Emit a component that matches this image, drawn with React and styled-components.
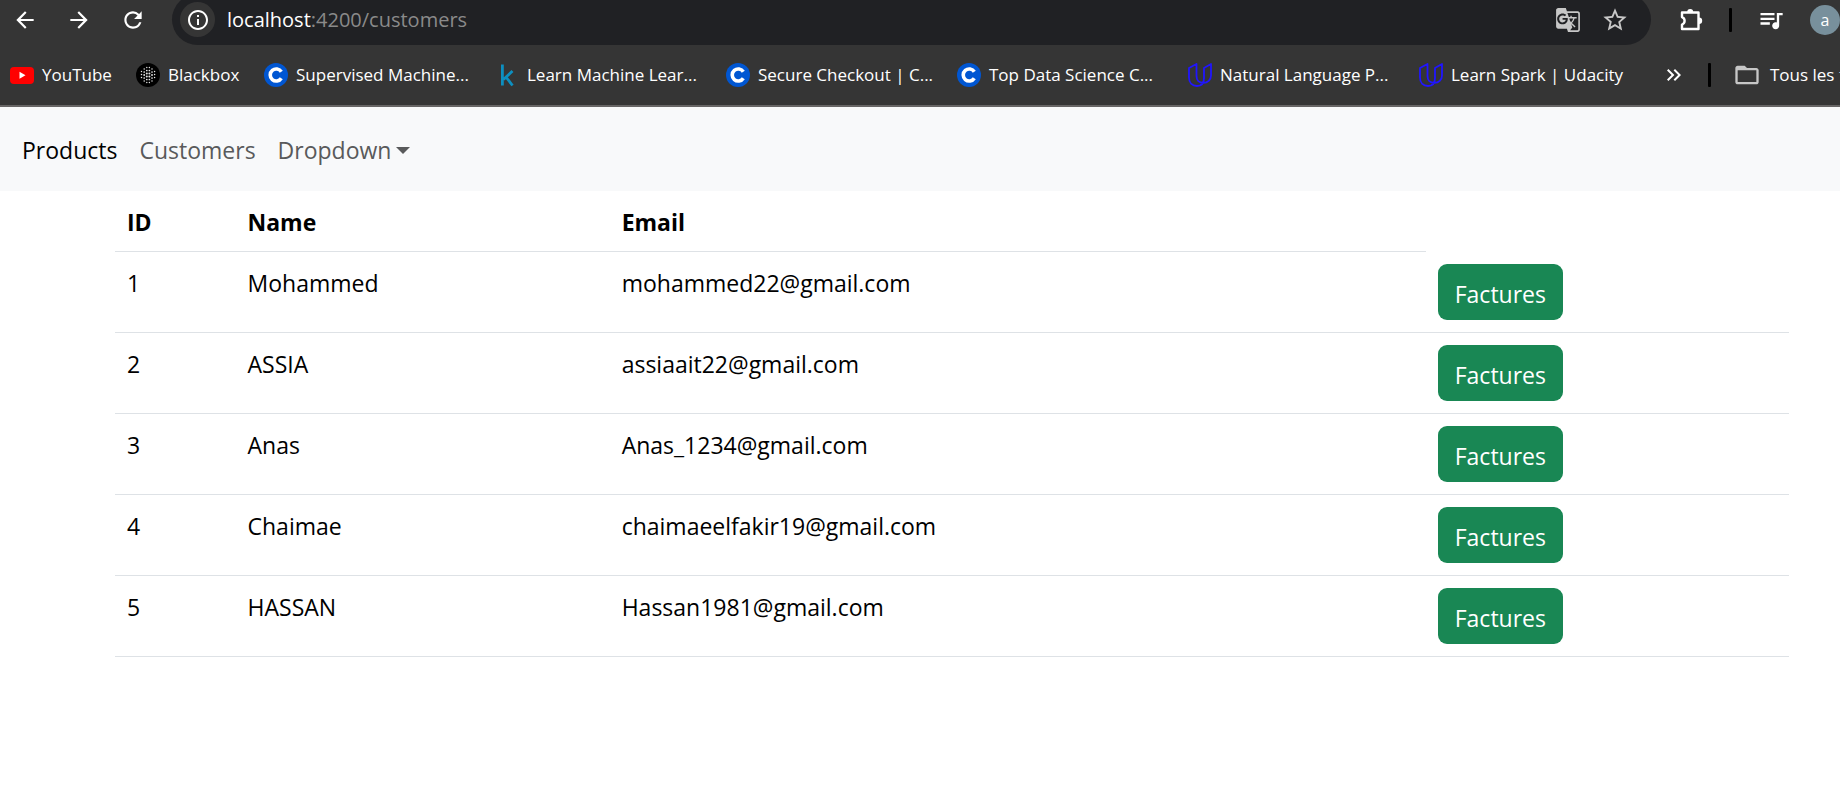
import React from "react";
import styled, { createGlobalStyle, css } from "styled-components";
import {
  MdArrowBack,
  MdArrowForward,
  MdRefresh,
  MdInfoOutline,
  MdGTranslate,
  MdStarBorder,
  MdQueueMusic,
  MdKeyboardDoubleArrowRight,
  MdFolderOpen,
} from "react-icons/md";

const GlobalStyle = createGlobalStyle`
  *, *::before, *::after { box-sizing: border-box; }
  body {
    margin: 0;
    background: #fff;
    color: #000;
    font-family: "Segoe UI", "Open Sans", "Noto Sans", sans-serif;
    overflow-x: hidden;
  }
  button { font: inherit; color: inherit; border: 0; background: none; padding: 0; cursor: pointer; }
  a { color: inherit; text-decoration: none; }
  svg { display: block; flex: none; }
`;

const BrowserChrome = styled.header`
  background: #353535;
  color: #fff;
  border-bottom: 2px solid #676565;
  overflow: hidden;
`;

const Toolbar = styled.div`
  display: flex;
  align-items: center;
  height: 51px;
  margin-top: -6px;
  padding-left: 12px;
`;

const NavButtons = styled.div`
  display: flex;
  gap: 28px;
  margin-right: 26px;
`;

const IconButton = styled.button`
  display: flex;
  flex: none;
  align-items: center;
  justify-content: center;
`;

const AddressBar = styled.div`
  display: flex;
  flex: 1;
  align-items: center;
  min-width: 0;
  height: 51px;
  padding: 0 22px 0 8px;
  border-radius: 26px;
  background: #202124;
  color: #c7c7c7;
`;

const SiteInfo = styled(IconButton)`
  width: 35px;
  height: 35px;
  border-radius: 50%;
  background: #353535;
  color: #fff;
`;

const Url = styled.a`
  flex: 1;
  margin-left: 12px;
  font-size: 20px;
  line-height: 28px;
  color: #8a8a8a;
`;

const Host = styled.span`
  color: #fff;
`;

const AddressActions = styled.div`
  display: flex;
  align-items: center;
  gap: 20px;
`;

const ToolbarEnd = styled.div`
  display: flex;
  flex: none;
  align-items: center;
  gap: 25px;
  margin-left: 27px;
`;

const Divider = styled.span`
  flex: none;
  width: 3px;
  height: 24px;
  border-radius: 1px;
  background: #000;
`;

const Avatar = styled.button`
  width: 30px;
  height: 30px;
  border-radius: 50%;
  background: #78909c;
  color: #fff;
  font-size: 16px;
  line-height: 28px;
`;

const BookmarksBar = styled.nav`
  display: flex;
  align-items: center;
  height: 60px;
  padding-left: 10px;
  font-size: 17px;
  line-height: 24px;
  white-space: nowrap;
`;

const Bookmark = styled.a`
  display: flex;
  flex: none;
  align-items: center;
  gap: 8px;
  width: ${(p) => p.$width}px;
`;

const BookmarksEnd = styled.div`
  display: flex;
  flex: 1;
  align-items: center;
  min-width: 0;
  overflow: hidden;
  gap: 22px;
  margin-left: 12px;
`;

const AllBookmarks = styled(IconButton)`
  gap: 9px;
`;

const Navbar = styled.nav`
  display: flex;
  align-items: center;
  gap: 22px;
  padding: 25px 22px 23px;
  background: #f8f9fa;
  font-size: 23px;
  line-height: 36px;
`;

const navItem = css`
  color: ${(p) => (p.$active ? "#000" : "#595a5b")};
`;

const NavLink = styled.a`
  ${navItem}
`;

const NavToggle = styled.button`
  ${navItem}
  display: flex;
  align-items: center;
  gap: 5px;

  &::after {
    content: "";
    border: 7px solid transparent;
    border-top-color: currentColor;
    border-bottom: 0;
  }
`;

const Main = styled.main`
  padding: 0 51px 0 115px;
`;

const Table = styled.table`
  width: 100%;
  table-layout: fixed;
  border-collapse: collapse;
  font-size: 23px;
  line-height: 34px;
`;

const Column = styled.col`
  width: ${(p) => p.$share}%;
`;

const HeadCell = styled.th`
  padding: 14px 12px 12px;
  border-bottom: 1px solid #dee2e6;
  text-align: left;
  font-weight: 700;
`;

const Cell = styled.td`
  padding: 14px 12px 12px;
  border-bottom: 1px solid #dee2e6;
  vertical-align: top;
`;

const ActionCell = styled(Cell)`
  padding: 12px;
`;

const InvoiceButton = styled.button`
  display: block;
  height: 56px;
  padding: 4px 17px 0;
  border-radius: 9px;
  background: #198754;
  color: #fff;
`;

function YouTubeIcon() {
  return (
    <svg width="24" height="24" viewBox="0 0 24 24">
      <rect y="4" width="24" height="17" rx="4" fill="#f00" />
      <path d="M9.500 8.800v7l6-3.500z" fill="#fff" />
    </svg>
  );
}

function BlackboxIcon() {
  const columns = [
    { x: 5.5, ys: [8.5, 11.5, 14.5] },
    { x: 8.2, ys: [6, 9, 12, 15, 18] },
    { x: 10.8, ys: [4.5, 7.5, 10.5, 13.5, 16.5, 19.5] },
    { x: 13.4, ys: [4.5, 7.5, 10.5, 13.5, 16.5, 19.5] },
    { x: 16, ys: [6, 9, 12, 15, 18] },
    { x: 18.6, ys: [8.5, 11.5, 14.5] },
  ];
  return (
    <svg width="24" height="24" viewBox="0 0 24 24">
      <circle cx="12" cy="12" r="12" fill="#000" />
      {columns.flatMap(({ x, ys }) =>
        ys.map((y) => (
          <circle
            key={`${x}:${y}`}
            cx={x}
            cy={y}
            r={1.15 - Math.hypot(x - 12, y - 12) * 0.06}
            fill="#e4e4e4"
          />
        ))
      )}
    </svg>
  );
}

function CourseraIcon() {
  return (
    <svg width="24" height="24" viewBox="0 0 24 24">
      <circle cx="12" cy="12" r="12" fill="#0056d2" />
      <path d="M17.300 8.800A6 6 0 1 0 17.300 15.200" fill="none" stroke="#fff" strokeWidth="3.600" />
    </svg>
  );
}

function KaggleIcon() {
  return (
    <svg width="24" height="24" viewBox="0 0 24 24" fill="none" stroke="#0d8fc0" strokeWidth="2.800">
      <path d="M7.400 1.500V22.500M17.500 8L8.500 16.500M11 14L17.500 22.500" />
    </svg>
  );
}

function UdacityIcon() {
  return (
    <svg
      width="24"
      height="24"
      viewBox="0 0 24 24"
      fill="none"
      stroke="#2015ff"
      strokeWidth="1.800"
      strokeLinejoin="round"
    >
      <path d="M8.500 1L1 5V14.500C1 20 4.500 23 9 23C13 23 16 20.500 16 15V5L23 1V12.500C23 17 19.500 19.800 15.500 19.800C11 19.800 8.500 17.500 8.500 13Z" />
    </svg>
  );
}

function PuzzleIcon() {
  return (
    <svg width="26" height="26" viewBox="0 0 26 26">
      <path
        d="M4 5.500h16.500v16.500h-16.500v-4.500a4 4 0 0 0 0-7.500z"
        fill="none"
        stroke="#fff"
        strokeWidth="2.400"
        strokeLinejoin="round"
      />
      <path d="M9.200 5a3 3 0 0 1 6 0zM21 10.500a3.200 3.200 0 0 1 0 6.400z" fill="#fff" />
    </svg>
  );
}

const bookmarks = [
  { label: "YouTube", Icon: YouTubeIcon, width: 126 },
  { label: "Blackbox", Icon: BlackboxIcon, width: 128 },
  { label: "Supervised Machine...", Icon: CourseraIcon, width: 231 },
  { label: "Learn Machine Lear...", Icon: KaggleIcon, width: 231 },
  { label: "Secure Checkout | C...", Icon: CourseraIcon, width: 231 },
  { label: "Top Data Science C...", Icon: CourseraIcon, width: 231 },
  { label: "Natural Language P...", Icon: UdacityIcon, width: 231 },
  { label: "Learn Spark | Udacity", Icon: UdacityIcon, width: 231 },
];

const customers = [
  { id: 1, name: "Mohammed", email: "mohammed22@gmail.com" },
  { id: 2, name: "ASSIA", email: "assiaait22@gmail.com" },
  { id: 3, name: "Anas", email: "Anas_1234@gmail.com" },
  { id: 4, name: "Chaimae", email: "chaimaeelfakir19@gmail.com" },
  { id: 5, name: "HASSAN", email: "Hassan1981@gmail.com" },
];

export default function App() {
  return (
    <>
      <GlobalStyle />
      <BrowserChrome>
        <Toolbar>
          <NavButtons>
            <IconButton aria-label="Back"><MdArrowBack size={26} /></IconButton>
            <IconButton aria-label="Forward"><MdArrowForward size={26} /></IconButton>
            <IconButton aria-label="Reload"><MdRefresh size={26} /></IconButton>
          </NavButtons>
          <AddressBar>
            <SiteInfo aria-label="Site information"><MdInfoOutline size={24} /></SiteInfo>
            <Url href="#"><Host>localhost</Host>:4200/customers</Url>
            <AddressActions>
              <IconButton aria-label="Translate"><MdGTranslate size={26} /></IconButton>
              <IconButton aria-label="Bookmark"><MdStarBorder size={28} /></IconButton>
            </AddressActions>
          </AddressBar>
          <ToolbarEnd>
            <IconButton aria-label="Extensions"><PuzzleIcon /></IconButton>
            <Divider />
            <IconButton aria-label="Media"><MdQueueMusic size={28} /></IconButton>
            <Avatar aria-label="Profile">a</Avatar>
          </ToolbarEnd>
        </Toolbar>
        <BookmarksBar>
          {bookmarks.map(({ label, Icon, width }) => (
            <Bookmark key={label} href="#" $width={width}>
              <Icon />
              {label}
            </Bookmark>
          ))}
          <BookmarksEnd>
            <IconButton aria-label="More bookmarks"><MdKeyboardDoubleArrowRight size={24} /></IconButton>
            <Divider />
            <AllBookmarks><MdFolderOpen size={28} color="#c7c7c7" />Tous les favoris</AllBookmarks>
          </BookmarksEnd>
        </BookmarksBar>
      </BrowserChrome>
      <Navbar>
        <NavLink href="#" $active>Products</NavLink>
        <NavLink href="#">Customers</NavLink>
        <NavToggle>Dropdown</NavToggle>
      </Navbar>
      <Main>
        <Table>
          <colgroup>
            <Column $share={7.2} />
            <Column $share={22.35} />
            <Column $share={48.75} />
            <Column $share={21.7} />
          </colgroup>
          <thead>
            <tr>
              <HeadCell>ID</HeadCell>
              <HeadCell>Name</HeadCell>
              <HeadCell>Email</HeadCell>
            </tr>
          </thead>
          <tbody>
            {customers.map((c) => (
              <tr key={c.id}>
                <Cell>{c.id}</Cell>
                <Cell>{c.name}</Cell>
                <Cell>{c.email}</Cell>
                <ActionCell><InvoiceButton>Factures</InvoiceButton></ActionCell>
              </tr>
            ))}
          </tbody>
        </Table>
      </Main>
    </>
  );
}
